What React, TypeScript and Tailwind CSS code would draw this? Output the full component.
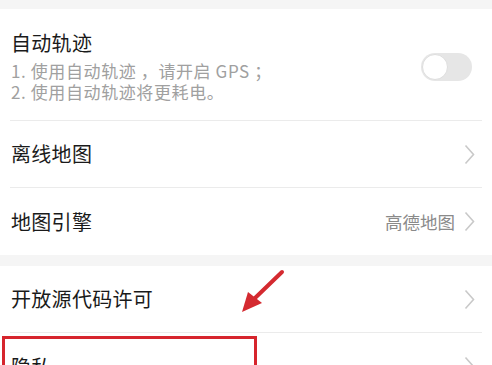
import { useState } from "react";

const font = { fontFamily: '"Noto Sans CJK SC", "Noto Sans", sans-serif' };

function Chevron() {
  return (
    <svg width="11" height="21" viewBox="0 0 11 21" className="shrink-0">
      <polyline points="1.5,1.5 9.5,10.5 1.5,19.5" fill="none" stroke="#c9c9c9" strokeWidth="1.6" />
    </svg>
  );
}

function LinkRow({ label, value, last }: { label: string; value?: string; last?: boolean }) {
  return (
    <div className={`mx-[10px] flex h-[67px] items-center justify-between pl-[1px] pr-[7px] ${last ? "" : "border-b border-[#ebebeb]"}`}>
      <span className="text-[20px] leading-[24px] tracking-[0.3px] text-[#1a1a1a]">{label}</span>
      <div className="flex items-center gap-[9px]">
        {value && <span className="text-[17.5px] leading-[24px] text-[#8a8a8a]">{value}</span>}
        <Chevron />
      </div>
    </div>
  );
}

export default function App() {
  const [auto, setAuto] = useState(false);

  return (
    <div className="relative h-[365px] w-[492px] overflow-hidden bg-[#f5f5f5]" style={font}>
      <div className="mt-[9px] bg-white">
        <div className="mx-[10px] flex items-center justify-between border-b border-[#ebebeb] pb-[18px] pl-[1px] pr-[10px] pt-[22px]">
          <div>
            <div className="text-[20px] leading-[24px] tracking-[0.3px] text-[#1a1a1a]">自动轨迹</div>
            <div className="mt-[5px] text-[17px] leading-[21px] tracking-[0.6px] text-[#a0a0a0]">
              <div>1. 使用自动轨迹 ，请开启 GPS ；</div>
              <div>2. 使用自动轨迹将更耗电。</div>
            </div>
          </div>
          <button
            onClick={() => setAuto(!auto)}
            className={`relative h-[28px] w-[51px] rounded-full ${auto ? "bg-[#3b8cf5]" : "bg-[#e6e6e6]"}`}
          >
            <span
              className={`absolute top-[1px] h-[26px] w-[26px] rounded-full border border-[#dedede] bg-white ${auto ? "left-[24px]" : "left-[1px]"}`}
            />
          </button>
        </div>
        <LinkRow label="离线地图" />
        <LinkRow label="地图引擎" value="高德地图" last />
      </div>

      <div className="mt-[11px] bg-white">
        <LinkRow label="开放源代码许可" />
        <LinkRow label="隐私" last />
      </div>

      {/* annotation overlay */}
      <div className="absolute left-[2px] top-[336px] h-[50px] w-[255px] border-[3px] border-[#d6252d]" />
      <svg className="absolute left-[236px] top-[266px]" width="52" height="52" viewBox="0 0 52 52">
        <line x1="46" y1="6" x2="18" y2="33" stroke="#d42a30" strokeWidth="4" strokeLinecap="round" />
        <polygon points="6,46 12,26 26,37" fill="#d42a30" />
      </svg>
    </div>
  );
}
